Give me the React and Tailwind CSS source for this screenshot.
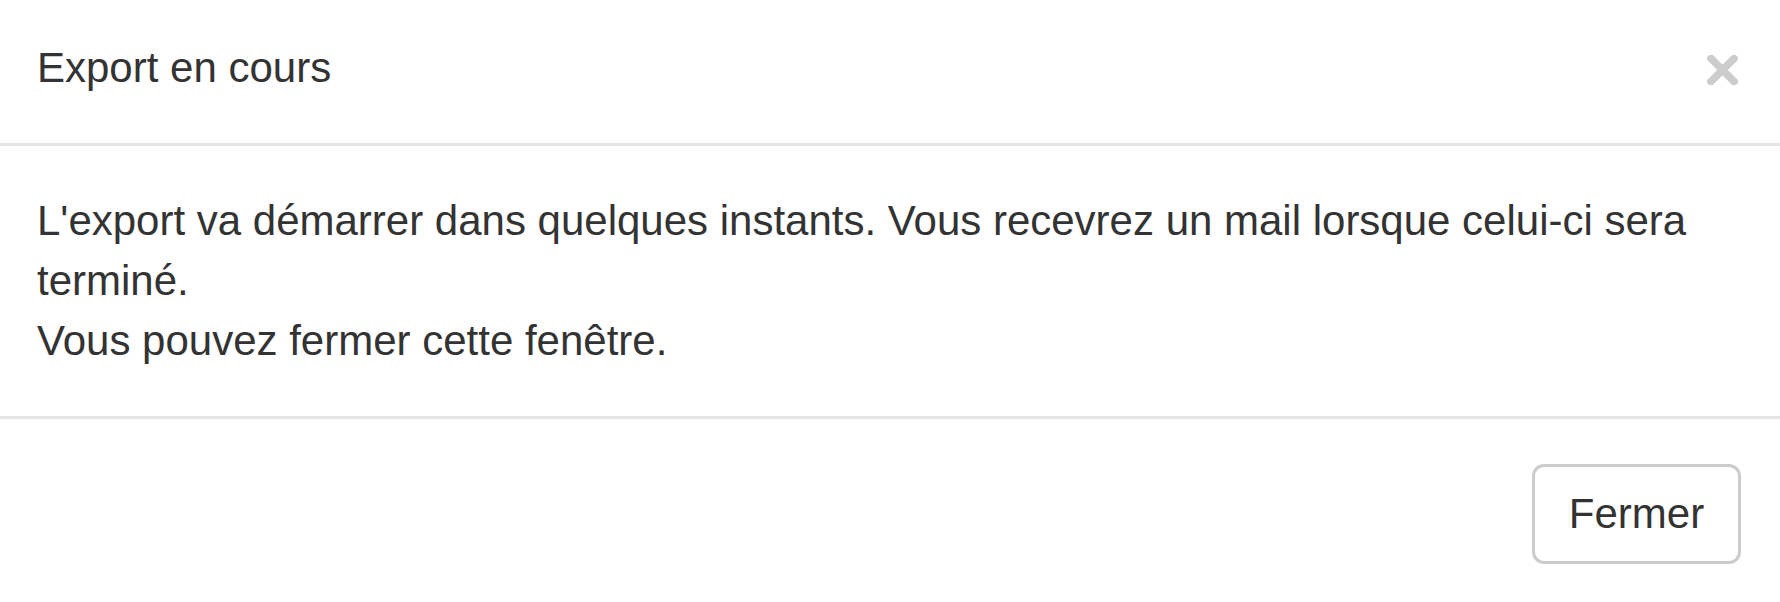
const CloseIcon = () => (
  <svg width="31" height="30" viewBox="0 0 31 30" aria-hidden="true">
    <path d="M4 3.5 L27 26.5 M27 3.5 L4 26.5" stroke="#cccccc" strokeWidth="7.5" strokeLinecap="square" fill="none" />
  </svg>
);

export default function App() {
  return (
    <div className="h-[602px] w-full overflow-hidden bg-white text-[#333333] font-['Liberation_Sans',Arial,sans-serif] text-[42px] leading-[60px]">
      {/* Header */}
      <div className="flex items-center justify-between pl-[37px] pr-[42px] pt-[38px] pb-[45px] border-b-[3px] border-[#e5e5e5]">
        <h4 className="font-normal">Export en cours</h4>
        <button type="button" aria-label="Fermer" className="mt-[3px]">
          <CloseIcon />
        </button>
      </div>

      {/* Body */}
      <div className="px-[37px] py-[45px] border-b-[3px] border-[#e5e5e5]">
        <p>
          L'export va démarrer dans quelques instants. Vous recevrez un mail lorsque celui-ci sera terminé.
          <br />
          Vous pouvez fermer cette fenêtre.
        </p>
      </div>

      {/* Footer */}
      <div className="flex justify-end pr-[39px] pt-[45px]">
        <button
          type="button"
          className="w-[209px] h-[100px] flex items-center justify-center border-[3px] border-[#cccccc] rounded-[12px] bg-white text-[#333333]"
        >
          Fermer
        </button>
      </div>
    </div>
  );
}
